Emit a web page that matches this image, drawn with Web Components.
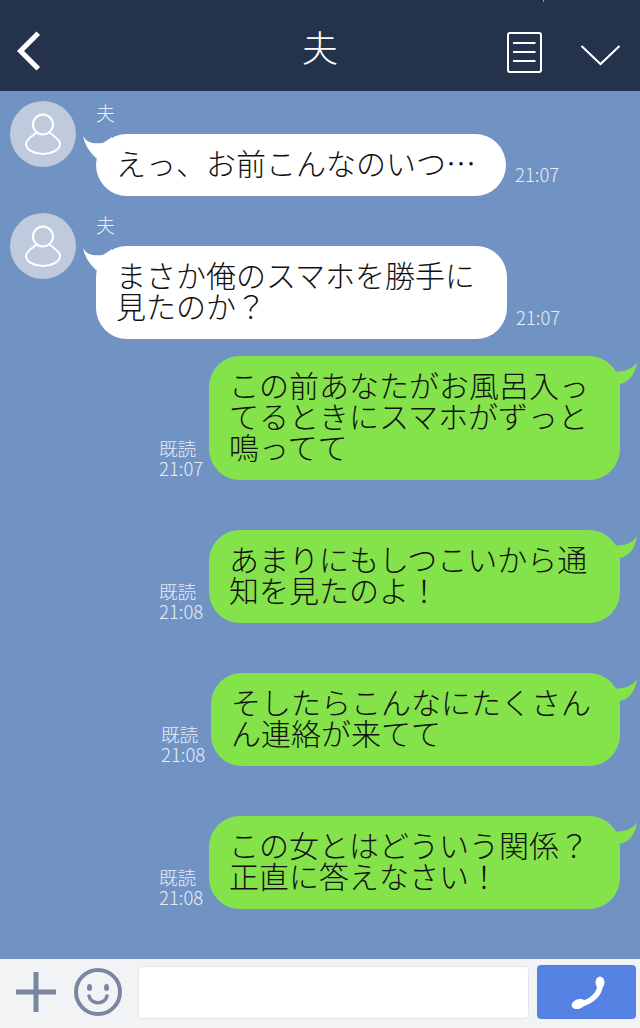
<!DOCTYPE html>
<html lang="ja"><head><meta charset="utf-8">
<style>
html,body{margin:0;padding:0}
body{width:640px;height:1028px;overflow:hidden;font-family:"Noto Sans CJK JP","Noto Sans",sans-serif}
</style></head><body>
<chat-app>
  <chat-header slot="header" title-text="夫"></chat-header>
  <in-msg name="夫" time="21:07" width="410">えっ、お前こんなのいつ…</in-msg>
  <in-msg name="夫" time="21:07" width="411" style="--gap:17px">まさか俺のスマホを勝手に<br>見たのか？</in-msg>
  <out-msg time="21:07" width="411" style="--gap:17px">この前あなたがお風呂入っ<br>てるときにスマホがずっと<br>鳴ってて</out-msg>
  <out-msg time="21:08" width="411" style="--gap:50px">あまりにもしつこいから通<br>知を見たのよ！</out-msg>
  <out-msg time="21:08" width="409" style="--gap:50px">そしたらこんなにたくさん<br>ん連絡が来てて</out-msg>
  <out-msg time="21:08" width="411" style="--gap:50px">この女とはどういう関係？<br>正直に答えなさい！</out-msg>
  <chat-footer slot="footer"></chat-footer>
</chat-app>
<script>
function def(name, css, html){
  customElements.define(name, class extends HTMLElement{
    connectedCallback(){
      if(this.shadowRoot) return;
      const r=this.attachShadow({mode:'open'});
      r.innerHTML='<style>'+css+'</style>'+(typeof html==='function'?html(this):html);
    }
  });
}
def('chat-app',
 ':host{display:flex;flex-direction:column;width:640px;height:1028px}'+
 '.chat{flex:1;background:#7093c4;padding-top:10px;min-height:0}',
 '<slot name="header"></slot><div class="chat"><slot></slot></div><slot name="footer"></slot>');

def('chat-header',
 ':host{display:flex;align-items:flex-start;height:91px;background:#25324c;position:relative;color:#fff;flex:none}'+
 '.back{margin:30px 0 0 16px;width:26px;height:42px;flex:none}'+
 '.title{position:absolute;left:0;right:0;top:20px;text-align:center;font-size:36px;line-height:52px;font-weight:200;pointer-events:none}'+
 '.speck{position:absolute;left:543px;top:0;width:1px;height:2px;background:#fff;opacity:.5}'+
 '.doc{margin:32px 0 0 auto;width:36px;height:41px;flex:none}'+
 '.chev{margin:44px 19px 0 38px;width:41px;height:22px;flex:none}',
 el=>`<svg class="back" viewBox="0 0 26 42"><path d="M20.500 5 4.500 21l16 16" fill="none" stroke="#fff" stroke-width="5" stroke-linecap="square"/></svg>
 <div class="title">${el.getAttribute('title-text')}</div><i class="speck"></i>
 <svg class="doc" viewBox="0 0 36 41"><rect x="2" y="1" width="33" height="39" rx="2" fill="none" stroke="#fff" stroke-width="2"/><path d="M7 11h22.500M7 20h22.500M7 29h22.500" stroke="#fff" stroke-width="2"/></svg>
 <svg class="chev" viewBox="0 0 41 22"><path d="M1.500 2 20.500 20 39.500 2" fill="none" stroke="#fff" stroke-width="2"/></svg>`);

const bubble=':host{display:flex;align-items:flex-end;margin-top:var(--gap,0)}'+
 '.b{position:relative;box-sizing:border-box;border-radius:31px;font-size:30px;line-height:31px;font-weight:300;color:#111;white-space:nowrap}'+
 '.t{position:absolute}';

def('in-msg',
 bubble+':host{align-items:flex-start;padding-left:10px}'+
 '.av{width:66px;height:66px;flex:none;margin-right:20px}'+
 '.col{display:flex;flex-direction:column;align-items:flex-start}'+
 '.n{font-size:19px;line-height:26px;height:33px;margin-top:-1px;margin-bottom:1px;color:#eef2f8;font-weight:300}'+
 '.r{display:flex;align-items:flex-end}'+
 '.b{background:#fff;padding:13px 20px 18px 20px}'+
 '.t{left:-14px;top:2px;width:30px;height:26px}'+
 '.time{margin-left:9px;margin-bottom:10px;font-size:18.500px;line-height:24px;color:#e6ecf5;font-weight:300}',
 el=>`<svg class="av" viewBox="0 0 66 66"><circle cx="33" cy="33" r="33" fill="#bfcbdc"/><path d="M27 31C23 35 16 38 16 43 16 49 25 53 33 53S50 49 50 43C50 38 43 35 39 31" fill="none" stroke="#fff" stroke-width="2"/><circle cx="33" cy="23.500" r="10" fill="#bfcbdc" stroke="#fff" stroke-width="2"/></svg>
 <div class="col"><div class="n">${el.getAttribute('name')}</div>
 <div class="r"><div class="b" style="width:${el.getAttribute('width')}px"><svg class="t" viewBox="0 0 30 26"><path d="M1 0C5 7 11 8 21 7L30 1V26L14 22C8 16 3 10 1 0Z" fill="#fff"/></svg><slot></slot></div><div class="time">${el.getAttribute('time')}</div></div></div>`);

def('out-msg',
 bubble+':host{justify-content:flex-end;padding-right:20px}'+
 '.m{font-size:18.500px;line-height:20px;color:#e6ecf5;font-weight:300;margin-right:6px;margin-bottom:2px;width:44px;flex:none}'+
 '.b{background:#84e34a;padding:13px 20px 18px 20px}'+
 '.t{right:-19px;top:6px;width:30px;height:24px}',
 el=>`<div class="m"><div>既読</div><div>${el.getAttribute('time')}</div></div>
 <div class="b" style="width:${el.getAttribute('width')}px"><svg class="t" viewBox="0 0 30 24"><path d="M28 0C24 7 14 11 3 9L0 24 11 22C20 20 26 13 28 0Z" fill="#84e34a"/></svg><slot></slot></div>`);

def('chat-footer',
 ':host{display:flex;align-items:center;box-sizing:border-box;height:69px;padding-bottom:3px;background:#f2f3f5;flex:none}'+
 '.plus{width:40px;height:40px;margin-left:16px;flex:none}'+
 '.smile{width:48px;height:48px;margin-left:18px;flex:none}'+
 '.in{box-sizing:border-box;width:391px;height:53px;margin-left:16px;background:#fff;border:1px solid #e3e5e9;border-radius:4px;flex:none}'+
 '.call{position:relative;width:99px;height:54px;margin-left:8px;background:#5582e2;border-radius:4px;display:flex;align-items:center;justify-content:center;flex:none}'+
 '.call svg{width:36px;height:36px}',
 `<svg class="plus" viewBox="0 0 40 40"><path d="M20 0v40M0 20h40" stroke="#7b87a1" stroke-width="5"/></svg>
 <svg class="smile" viewBox="0 0 48 48"><ellipse cx="24" cy="24" rx="22" ry="22" fill="none" stroke="#7b87a1" stroke-width="4"/><ellipse cx="15.500" cy="19.500" rx="2.500" ry="3.500" fill="#7b87a1"/><ellipse cx="32.500" cy="19.500" rx="2.500" ry="3.500" fill="#7b87a1"/><path d="M15 28c2 9 16 9 18 0" fill="none" stroke="#7b87a1" stroke-width="3.500" stroke-linecap="round"/></svg>
 <div class="in"></div>
 <div class="call"><svg viewBox="0 0 36 36"><path d="M31 11C31 19 24 27 12 30" fill="none" stroke="#fff" stroke-width="5.500"/><ellipse cx="31" cy="8.500" rx="4.500" ry="6" fill="#fff"/><ellipse cx="9.500" cy="30" rx="7" ry="4.800" fill="#fff" transform="rotate(-20 9.500 30)"/></svg></div>`);
</script>
</body></html>
